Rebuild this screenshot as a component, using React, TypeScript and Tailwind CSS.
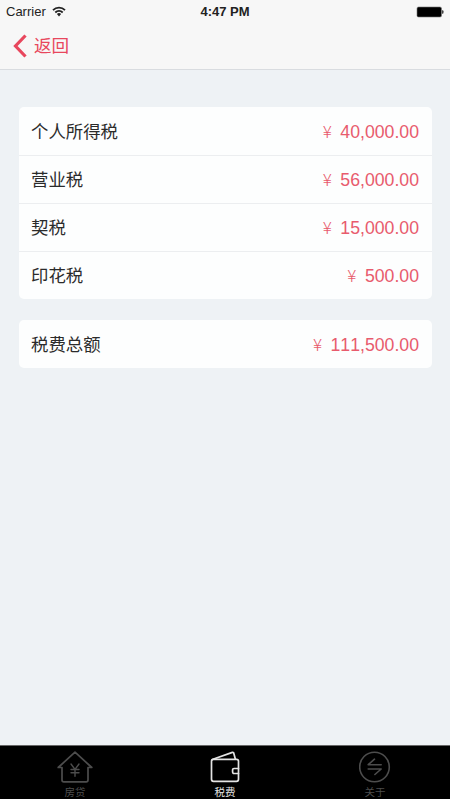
import React from 'react'

const taxes = [
  { label: '个人所得税', amount: '40,000.00' },
  { label: '营业税', amount: '56,000.00' },
  { label: '契税', amount: '15,000.00' },
  { label: '印花税', amount: '500.00' },
]

function TaxRow({ label, amount }: { label: string; amount: string }) {
  return (
    <div className="flex h-12 items-center justify-between border-t border-[#eceef0] pl-3 pr-[13px] first:border-transparent">
      <span className="text-[17.4px] leading-6 text-[#2b2b2b]">{label}</span>
      <span className="flex items-center leading-6 text-[#e85b6d] [font-kerning:none]">
        <span className="w-[18px] pb-0.5 text-center font-['Noto_Sans_CJK_SC',sans-serif] text-[17px] font-light">¥</span>
        <span className="ml-1 text-[17.7px]">{amount}</span>
      </span>
    </div>
  )
}

function StatusBar() {
  return (
    <div className="grid h-[22px] grid-cols-3 items-center px-[6px] text-[#222222]">
      <div className="flex items-center gap-[6px]">
        <span className="text-[13px] leading-[22px]">Carrier</span>
        <svg width="14" height="11" viewBox="0 0 14 11" fill="none" stroke="currentColor" strokeWidth="1.8">
          <path d="M1 4.1a8.5 8.5 0 0 1 12 0" />
          <path d="M3.3 6.5a5.3 5.3 0 0 1 7.4 0" />
          <path d="M4.9 8.1a3 3 0 0 1 4.2 0L7 10.4z" fill="currentColor" stroke="none" />
        </svg>
      </div>
      <span className="pt-px text-center text-[13px] font-bold leading-[22px]">4:47 PM</span>
      <svg className="justify-self-end" width="28" height="12" viewBox="0 0 28 12">
        <rect x="1" y="1" width="24.5" height="10" rx="1.5" fill="#000000" stroke="#777777" strokeWidth="0.6" />
        <path d="M26 4.2h.5a1 1 0 0 1 1 1v1.6a1 1 0 0 1-1 1H26z" fill="#444444" />
      </svg>
    </div>
  )
}

function HouseIcon() {
  return (
    <svg width="36" height="32" viewBox="0 0 36 32" fill="none" stroke="currentColor" strokeWidth="1.7" strokeLinejoin="round" strokeLinecap="round">
      <path d="M5 16.5H1.2L18 1.2l16.8 15.3H31V29a1.8 1.8 0 0 1-1.8 1.8H6.8A1.8 1.8 0 0 1 5 29z" />
      <path d="M14 13l4 5.3 4-5.3M18 18.3v6.9M14 18.5h8M14 21.8h8" strokeWidth="1.4" />
    </svg>
  )
}

function WalletIcon() {
  return (
    <svg width="30" height="32" viewBox="0 0 30 32" fill="none" stroke="currentColor" strokeWidth="1.7" strokeLinejoin="round" strokeLinecap="round">
      <path d="M28.5 17.5V10.3a2 2 0 0 0-2-2h-23a2 2 0 0 0-2 2v18a2 2 0 0 0 2 2h23a2 2 0 0 0 2-2v-5.8" />
      <path d="M2.2 8.5L22.4 1.4a1 1 0 0 1 1.3.7L25.4 8.2" />
      <path d="M28.5 17.5h-4.5a1.4 1.4 0 0 0-1.4 1.4v2.2a1.4 1.4 0 0 0 1.4 1.4h4.5z" />
    </svg>
  )
}

function ExchangeIcon() {
  return (
    <svg width="32" height="32" viewBox="0 0 32 32" fill="none" stroke="currentColor" strokeWidth="1.6" strokeLinejoin="round" strokeLinecap="round">
      <circle cx="15.5" cy="16" r="14.8" />
      <path d="M22.2 13.7H9.2l6.3-5.5M9.2 18h13l-6.3 5.5" />
    </svg>
  )
}

const tabs = [
  { label: '房贷', icon: HouseIcon, color: 'text-[#4d4d4d]' },
  { label: '税费', icon: WalletIcon, color: 'text-[#e4e4e4]' },
  { label: '关于', icon: ExchangeIcon, color: 'text-[#4d4d4d]' },
]

export default function App() {
  return (
    <div className="flex h-[799px] w-[450px] flex-col overflow-hidden bg-[#eef2f5] font-['Liberation_Sans','Noto_Sans_CJK_SC',sans-serif]">
      <header className="h-[70px] border-b border-[#d9dce0] bg-[#f7f7f7]">
        <StatusBar />
        <button className="flex h-[47px] items-center pl-[13px] text-[#e8475d]">
          <svg width="15" height="24" viewBox="0 0 15 24" fill="none" stroke="currentColor" strokeWidth="3.2">
            <path d="M12.5 1.5L2.5 12l10 10.5" />
          </svg>
          <span className="ml-1.5 text-[17.6px] leading-6">返回</span>
        </button>
      </header>

      <main className="flex flex-1 flex-col gap-[21px] pl-[19px] pr-[18px] pt-[37px]">
        <section className="rounded-[5px] bg-[#fdfefe]">
          {taxes.map((tax) => (
            <TaxRow key={tax.label} {...tax} />
          ))}
        </section>
        <section className="rounded-[5px] bg-[#fdfefe]">
          <TaxRow label="税费总额" amount="111,500.00" />
        </section>
      </main>

      <nav className="grid h-[54px] grid-cols-3 border-t border-[#666666] bg-black">
        {tabs.map(({ label, icon: Icon, color }) => (
          <div key={label} className={`flex flex-col items-center pt-[5px] ${color}`}>
            <Icon />
            <span className="mt-0.5 text-[10.5px] leading-[14px]">{label}</span>
          </div>
        ))}
      </nav>
    </div>
  )
}
